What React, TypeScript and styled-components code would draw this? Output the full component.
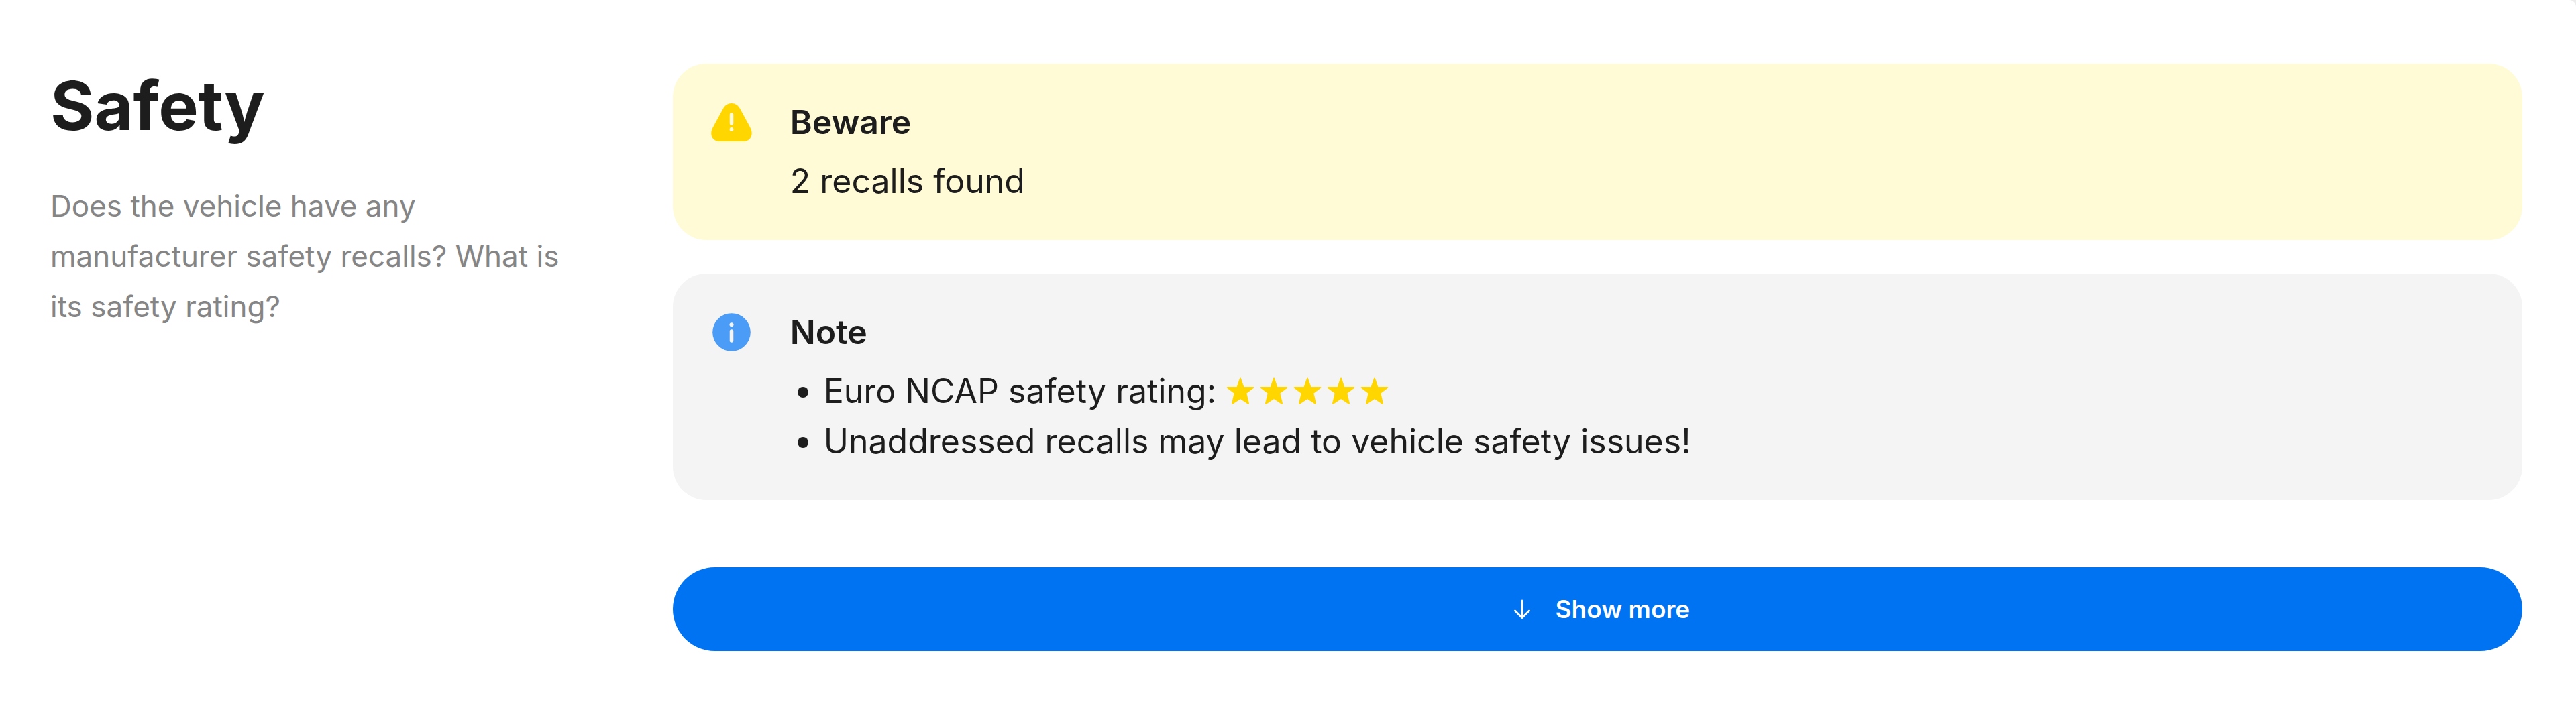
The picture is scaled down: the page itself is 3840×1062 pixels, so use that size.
import React from "react";
import styled, { createGlobalStyle } from "styled-components";

const GlobalStyle = createGlobalStyle`
  *, *::before, *::after { box-sizing: border-box; }
  body {
    margin: 0;
    background: #ececec;
    color: #1d1d1d;
    font-family: Inter, "Liberation Sans", sans-serif;
  }
`;

const Section = styled.section`
  display: grid;
  grid-template-columns: minmax(0, 22fr) minmax(0, 78fr);
  column-gap: 150px;
  align-items: start;
  min-height: 100vh;
  padding: 95px 80px 90px 75px;
  border-top-right-radius: 10px;
  background: #fff;
`;

const Intro = styled.header`
  display: flex;
  flex-direction: column;
  gap: 50px;
`;

const Heading = styled.h2`
  margin: 0;
  font-size: 100px;
  line-height: 125px;
  font-weight: 700;
`;

const Lead = styled.p`
  margin: 0;
  color: #858585;
  font-size: 44px;
  line-height: 75px;
`;

const Content = styled.div`
  display: flex;
  flex-direction: column;
  gap: 100px;
`;

const Notices = styled.div`
  display: flex;
  flex-direction: column;
  gap: 50px;
`;

const Notice = styled.article<{ $tone: "warning" | "info" }>`
  display: flex;
  gap: 50px;
  padding: 50px;
  border-radius: 50px;
  background: ${({ $tone }) => ($tone === "warning" ? "#fffbd6" : "#f4f4f4")};
`;

const NoticeIcon = styled.svg`
  flex: none;
  width: 75px;
  height: 75px;
`;

const NoticeBody = styled.div`
  display: flex;
  flex-direction: column;
  gap: 13px;
  font-size: 50px;
  line-height: 75px;
`;

const NoticeTitle = styled.h3`
  margin: 0;
  font-size: 50px;
  line-height: 75px;
  font-weight: 600;
`;

const NoticeText = styled.p`
  margin: 0;
`;

const NoticeList = styled.ul`
  margin: 0;
  padding-left: 50px;
`;

const Stars = styled.span`
  display: inline-flex;
  gap: 6px;
  vertical-align: -4px;
`;

const StarIcon = styled.svg`
  width: 44px;
  height: 44px;
`;

const MoreButton = styled.button`
  display: flex;
  align-items: center;
  justify-content: center;
  gap: 25px;
  width: 100%;
  height: 125px;
  border: 0;
  border-radius: 63px;
  background: #0073f2;
  color: #fff;
  font-family: inherit;
  font-size: 37px;
  line-height: 50px;
  font-weight: 600;
  cursor: pointer;
`;

const ArrowIcon = styled.svg`
  width: 50px;
  height: 50px;
`;

const WarningGlyph = () => (
  <NoticeIcon viewBox="0 0 75 75" aria-hidden="true">
    <path
      d="M37.500 9C43 9 47 12 49.500 16L65 44.500C71.500 56 65.500 66 55.500 66H19.500C9.500 66 3.500 56 10 44.500L25.500 16C28 12 32 9 37.500 9Z"
      fill="#ffd600"
    />
    <path d="M37.500 26V39" stroke="#fffbd6" strokeWidth="5.500" strokeLinecap="round" />
    <circle cx="37.500" cy="48" r="2.900" fill="#fffbd6" />
  </NoticeIcon>
);

const InfoGlyph = () => (
  <NoticeIcon viewBox="0 0 75 75" aria-hidden="true">
    <circle cx="37.500" cy="37.500" r="28.300" fill="#4b9cf6" />
    <circle cx="37.500" cy="26.300" r="3" fill="#f4f4f4" />
    <path d="M37.500 36V50" stroke="#f4f4f4" strokeWidth="5.500" strokeLinecap="round" />
  </NoticeIcon>
);

const Star = () => (
  <StarIcon viewBox="0 0 44 44" aria-hidden="true">
    <path
      d="M22 3.500L26.500 16.800L41.300 17L30.300 25.300L34 40.800L22 33L10 40.800L13.700 25.300L2.700 17L17.500 16.800Z"
      fill="#ffd600"
      stroke="#ffd600"
      strokeWidth="2"
      strokeLinejoin="round"
    />
  </StarIcon>
);

const Rating = ({ value }: { value: number }) => (
  <Stars role="img" aria-label={`${value} out of 5 stars`}>
    {Array.from({ length: value }, (_, i) => (
      <Star key={i} />
    ))}
  </Stars>
);

export default function App() {
  return (
    <>
      <GlobalStyle />
      <Section>
        <Intro>
          <Heading>Safety</Heading>
          <Lead>Does the vehicle have any manufacturer safety recalls? What is its safety rating?</Lead>
        </Intro>
        <Content>
          <Notices>
            <Notice $tone="warning">
              <WarningGlyph />
              <NoticeBody>
                <NoticeTitle>Beware</NoticeTitle>
                <NoticeText>2 recalls found</NoticeText>
              </NoticeBody>
            </Notice>
            <Notice $tone="info">
              <InfoGlyph />
              <NoticeBody>
                <NoticeTitle>Note</NoticeTitle>
                <NoticeList>
                  <li>
                    Euro NCAP safety rating: <Rating value={5} />
                  </li>
                  <li>Unaddressed recalls may lead to vehicle safety issues!</li>
                </NoticeList>
              </NoticeBody>
            </Notice>
          </Notices>
          <MoreButton type="button">
            <ArrowIcon viewBox="0 0 50 50" fill="none" aria-hidden="true">
              <path
                d="M25 12V37M14.500 27L25 37.500L35.500 27"
                stroke="currentColor"
                strokeWidth="3"
                strokeLinecap="round"
                strokeLinejoin="round"
              />
            </ArrowIcon>
            Show more
          </MoreButton>
        </Content>
      </Section>
    </>
  );
}
